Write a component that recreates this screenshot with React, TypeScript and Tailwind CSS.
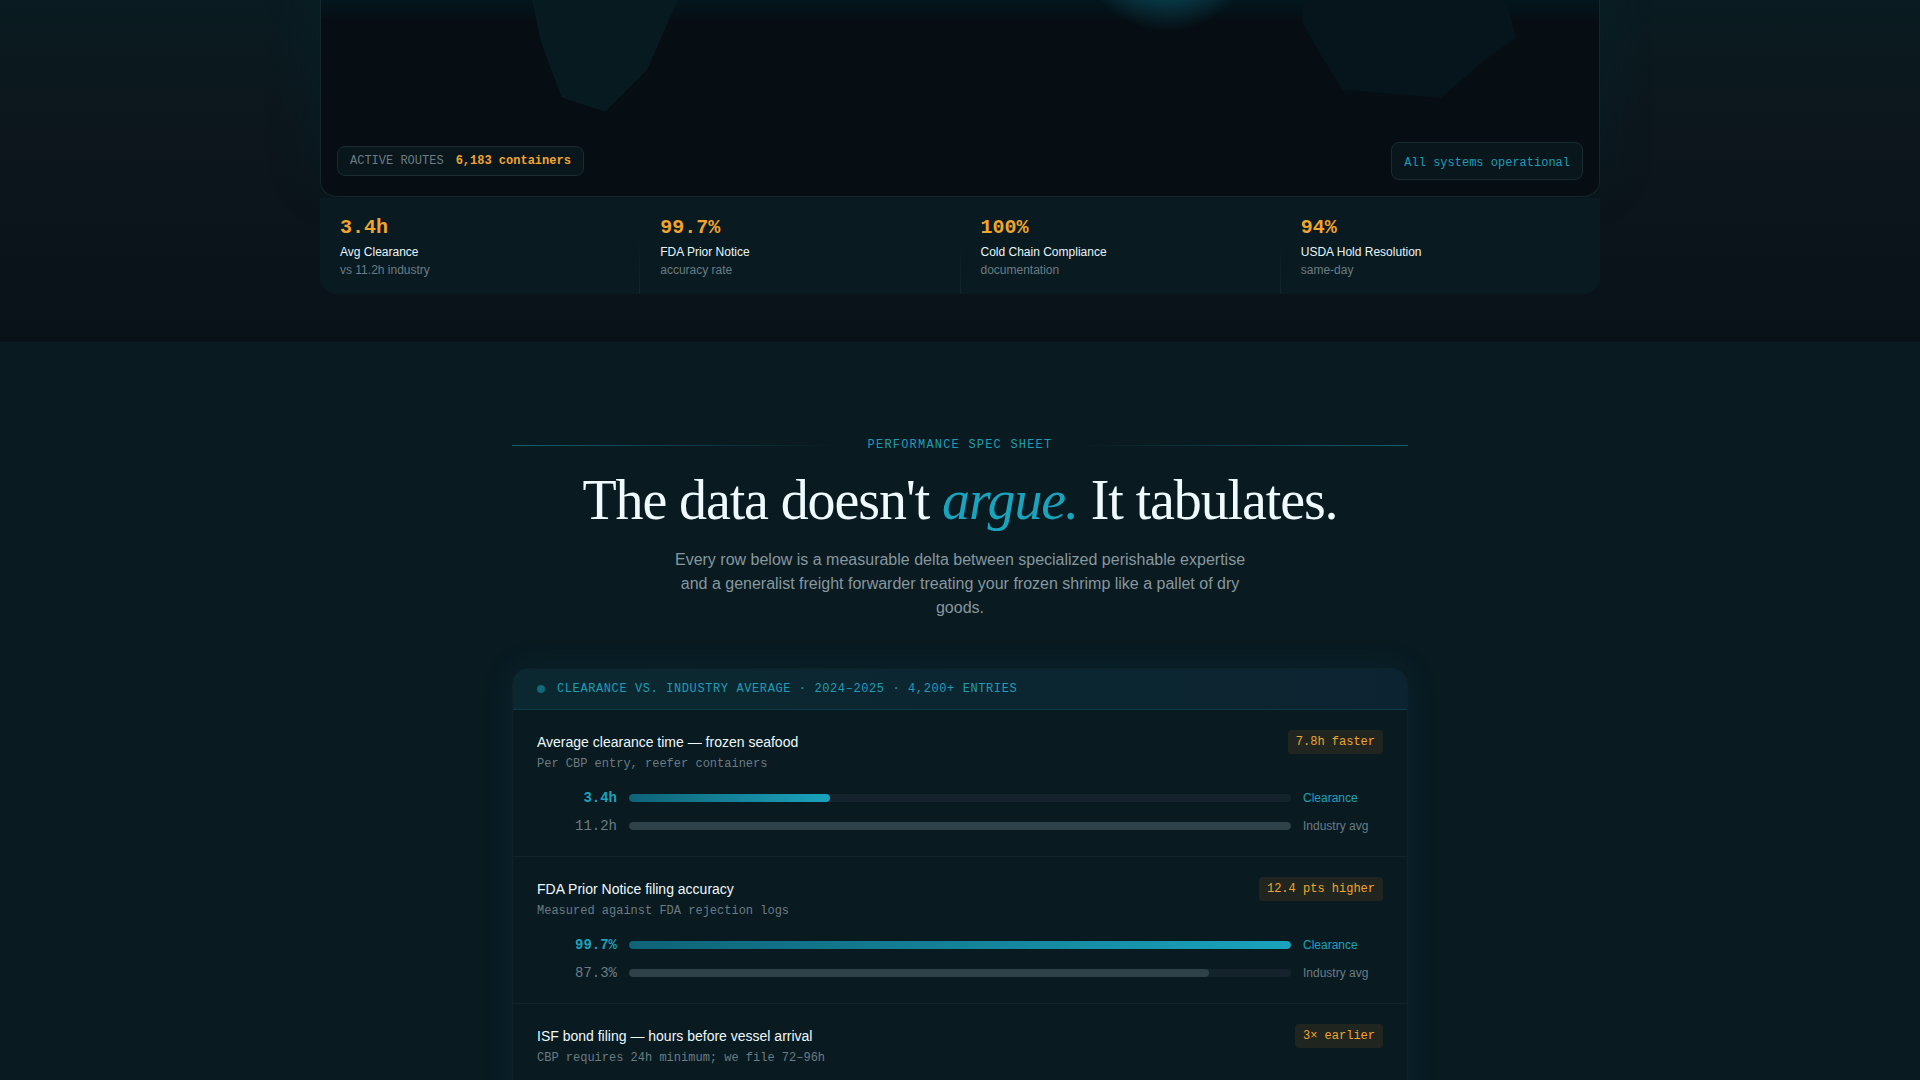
interface Stat {
  value: string;
  label: string;
  note: string;
}

interface Metric {
  title: string;
  note: string;
  delta: string;
  ours: { text: string; amount: number };
  industry: { text: string; amount: number };
}

const stats: Stat[] = [
  { value: '3.4h', label: 'Avg Clearance', note: 'vs 11.2h industry' },
  { value: '99.7%', label: 'FDA Prior Notice', note: 'accuracy rate' },
  { value: '100%', label: 'Cold Chain Compliance', note: 'documentation' },
  { value: '94%', label: 'USDA Hold Resolution', note: 'same-day' },
];

const metrics: Metric[] = [
  {
    title: 'Average clearance time — frozen seafood',
    note: 'Per CBP entry, reefer containers',
    delta: '7.8h faster',
    ours: { text: '3.4h', amount: 3.4 },
    industry: { text: '11.2h', amount: 11.2 },
  },
  {
    title: 'FDA Prior Notice filing accuracy',
    note: 'Measured against FDA rejection logs',
    delta: '12.4 pts higher',
    ours: { text: '99.7%', amount: 99.7 },
    industry: { text: '87.3%', amount: 87.3 },
  },
  {
    title: 'ISF bond filing — hours before vessel arrival',
    note: 'CBP requires 24h minimum; we file 72–96h',
    delta: '3× earlier',
    ours: { text: '72h', amount: 72 },
    industry: { text: '24h', amount: 24 },
  },
];

const mono = "font-['Liberation_Mono',monospace]";

function RouteMap() {
  return (
    <div className="relative h-[197px] overflow-hidden rounded-b-2xl border-x border-b border-[#15272c] bg-[#060e14] shadow-[0_-20px_50px_rgba(4,40,50,0.4)]">
      <svg
        className="block w-full"
        viewBox="0 0 1278 196"
        preserveAspectRatio="xMidYMin slice"
        aria-hidden="true"
      >
        <defs>
          <radialGradient id="hub">
            <stop offset="0" stopColor="#129db5" stopOpacity="0.6" />
            <stop offset="0.55" stopColor="#0f7f93" stopOpacity="0.45" />
            <stop offset="0.8" stopColor="#0e6377" stopOpacity="0.25" />
            <stop offset="1" stopColor="#0e6377" stopOpacity="0" />
          </radialGradient>
          <linearGradient id="haze" x1="0" y1="0" x2="0" y2="1">
            <stop offset="0" stopColor="#03161d" />
            <stop offset="1" stopColor="#03161d" stopOpacity="0" />
          </linearGradient>
        </defs>
        <rect width="1278" height="20" fill="url(#haze)" />
        {/* Land masses */}
        <path d="M212 0L220 40L241 97L284 111L326 69L356 0Z" fill="#071a20" stroke="#0a242b" strokeWidth="0.5" />
        <path d="M983 0L981 22L1001 57L1022 90L1120 98L1161 62L1195 38L1185 0Z" fill="#05151b" />
        <circle cx="846" cy="-60" r="91" fill="url(#hub)" />
      </svg>

      <div className="absolute inset-x-4 bottom-4 flex items-center justify-between">
        <div className={`flex gap-3 rounded-lg border border-[#1a2b31] bg-[#09161c] px-3 py-1.5 text-xs ${mono}`}>
          <span className="text-[#6b7c83]">ACTIVE ROUTES</span>
          <span className="font-bold text-[#f0a52c]">6,183 containers</span>
        </div>
        <div className="rounded-lg border border-[#1a2b31] bg-[#09161c] px-3 py-1.5">
          <span className={`text-xs text-[#1f9db5] ${mono}`}>All systems operational</span>
        </div>
      </div>
    </div>
  );
}

function StatStrip() {
  return (
    <dl className="relative mt-px grid grid-cols-4 gap-px overflow-hidden rounded-b-2xl bg-[#091a21]">
      {stats.map((s, i) => (
        <div key={s.label} className="relative flex flex-col gap-0.5 px-5 py-4">
          {i < stats.length - 1 && (
            <span className="absolute -right-px bottom-0 h-14 w-px bg-linear-to-b from-transparent to-[#11262d]" />
          )}
          <dd className={`text-xl font-bold text-[#f0a52c] ${mono}`}>{s.value}</dd>
          <dt className="text-xs text-[#e8f6fa]">{s.label}</dt>
          <dd className="text-xs text-[#6b7c83]">{s.note}</dd>
        </div>
      ))}
    </dl>
  );
}

function Bar({ text, percent, ours }: { text: string; percent: number; ours: boolean }) {
  return (
    <div className="flex items-center gap-3">
      <span className={`w-20 text-right text-sm ${mono} ${ours ? 'font-bold text-[#1aa3bd]' : 'text-[#6b7c83]'}`}>
        {text}
      </span>
      <div className="h-2 flex-1 overflow-hidden rounded-full bg-[#15242c]">
        <div
          className={`h-full rounded-full ${ours ? 'bg-linear-to-r from-[#0e6377] to-[#1aa3bd]' : 'bg-[#2f4149]'}`}
          style={{ width: `${percent}%` }}
        />
      </div>
      <span className={`w-20 text-xs ${ours ? 'text-[#1aa3bd]' : 'text-[#6b7c83]'}`}>
        {ours ? 'Clearance' : 'Industry avg'}
      </span>
    </div>
  );
}

function MetricRow({ metric }: { metric: Metric }) {
  const max = Math.max(metric.ours.amount, metric.industry.amount);

  return (
    <li className="border-b border-[#12242b] px-6 py-5">
      <div className="mb-4 flex items-start justify-between">
        <div>
          <h3 className="text-sm leading-6 text-[#eef9fc]">{metric.title}</h3>
          <p className={`mt-0.5 text-xs text-[#6b7c83] ${mono}`}>{metric.note}</p>
        </div>
        <span className={`rounded-sm bg-[#20261f] px-2 py-1 text-xs text-[#f0a52c] ${mono}`}>{metric.delta}</span>
      </div>
      <div className="space-y-2">
        <Bar ours text={metric.ours.text} percent={(metric.ours.amount / max) * 100} />
        <Bar ours={false} text={metric.industry.text} percent={(metric.industry.amount / max) * 100} />
      </div>
    </li>
  );
}

export default function App() {
  return (
    <main className="h-screen overflow-hidden bg-[#091a21] font-['Liberation_Sans',sans-serif]">
      {/* Hero, lower part */}
      <section className="overflow-hidden bg-linear-to-b from-[#0a1c21] via-[#0c161c] via-40% to-[#091218] px-6 pb-12">
        <div className="mx-auto max-w-7xl">
          <RouteMap />
          <StatStrip />
        </div>
      </section>

      <section className="px-6 py-24">
        <div className="mx-auto max-w-4xl">
          <div className="flex items-center gap-6">
            <span className="h-px flex-1 bg-linear-to-r from-[#12606f] to-transparent" />
            <span className={`text-xs leading-[15px] tracking-widest text-[#1f9db5] ${mono}`}>
              PERFORMANCE SPEC SHEET
            </span>
            <span className="h-px flex-1 bg-linear-to-l from-[#12606f] to-transparent" />
          </div>
          <h2 className="mt-4 text-center font-['Liberation_Serif',serif] text-[56px] leading-[63px] tracking-[-0.02em] text-[#eefafd]">
            The data doesn't <em className="text-[#1aa3bd]">argue.</em> It tabulates.
          </h2>
          <p className="mx-auto mt-4 max-w-xl text-center text-base text-[#87979e]">
            Every row below is a measurable delta between specialized perishable expertise and a generalist freight
            forwarder treating your frozen shrimp like a pallet of dry goods.
          </p>

          <div className="mt-12 overflow-hidden rounded-2xl border border-[#0f2229] bg-[#091a21] shadow-[0_0_32px_rgba(14,99,119,0.14)]">
            <div className="flex items-center gap-3 border-b border-[#0d3a44] bg-linear-to-r from-[#0b2830] to-[#0c2431] px-6 py-3">
              <span className="size-2 rounded-full bg-[#106878]" />
              <span className={`text-xs tracking-wider text-[#1f9db5] ${mono}`}>
                CLEARANCE VS. INDUSTRY AVERAGE · 2024–2025 · 4,200+ ENTRIES
              </span>
            </div>
            <ul>
              {metrics.map((m) => (
                <MetricRow key={m.title} metric={m} />
              ))}
            </ul>
          </div>
        </div>
      </section>
    </main>
  );
}
